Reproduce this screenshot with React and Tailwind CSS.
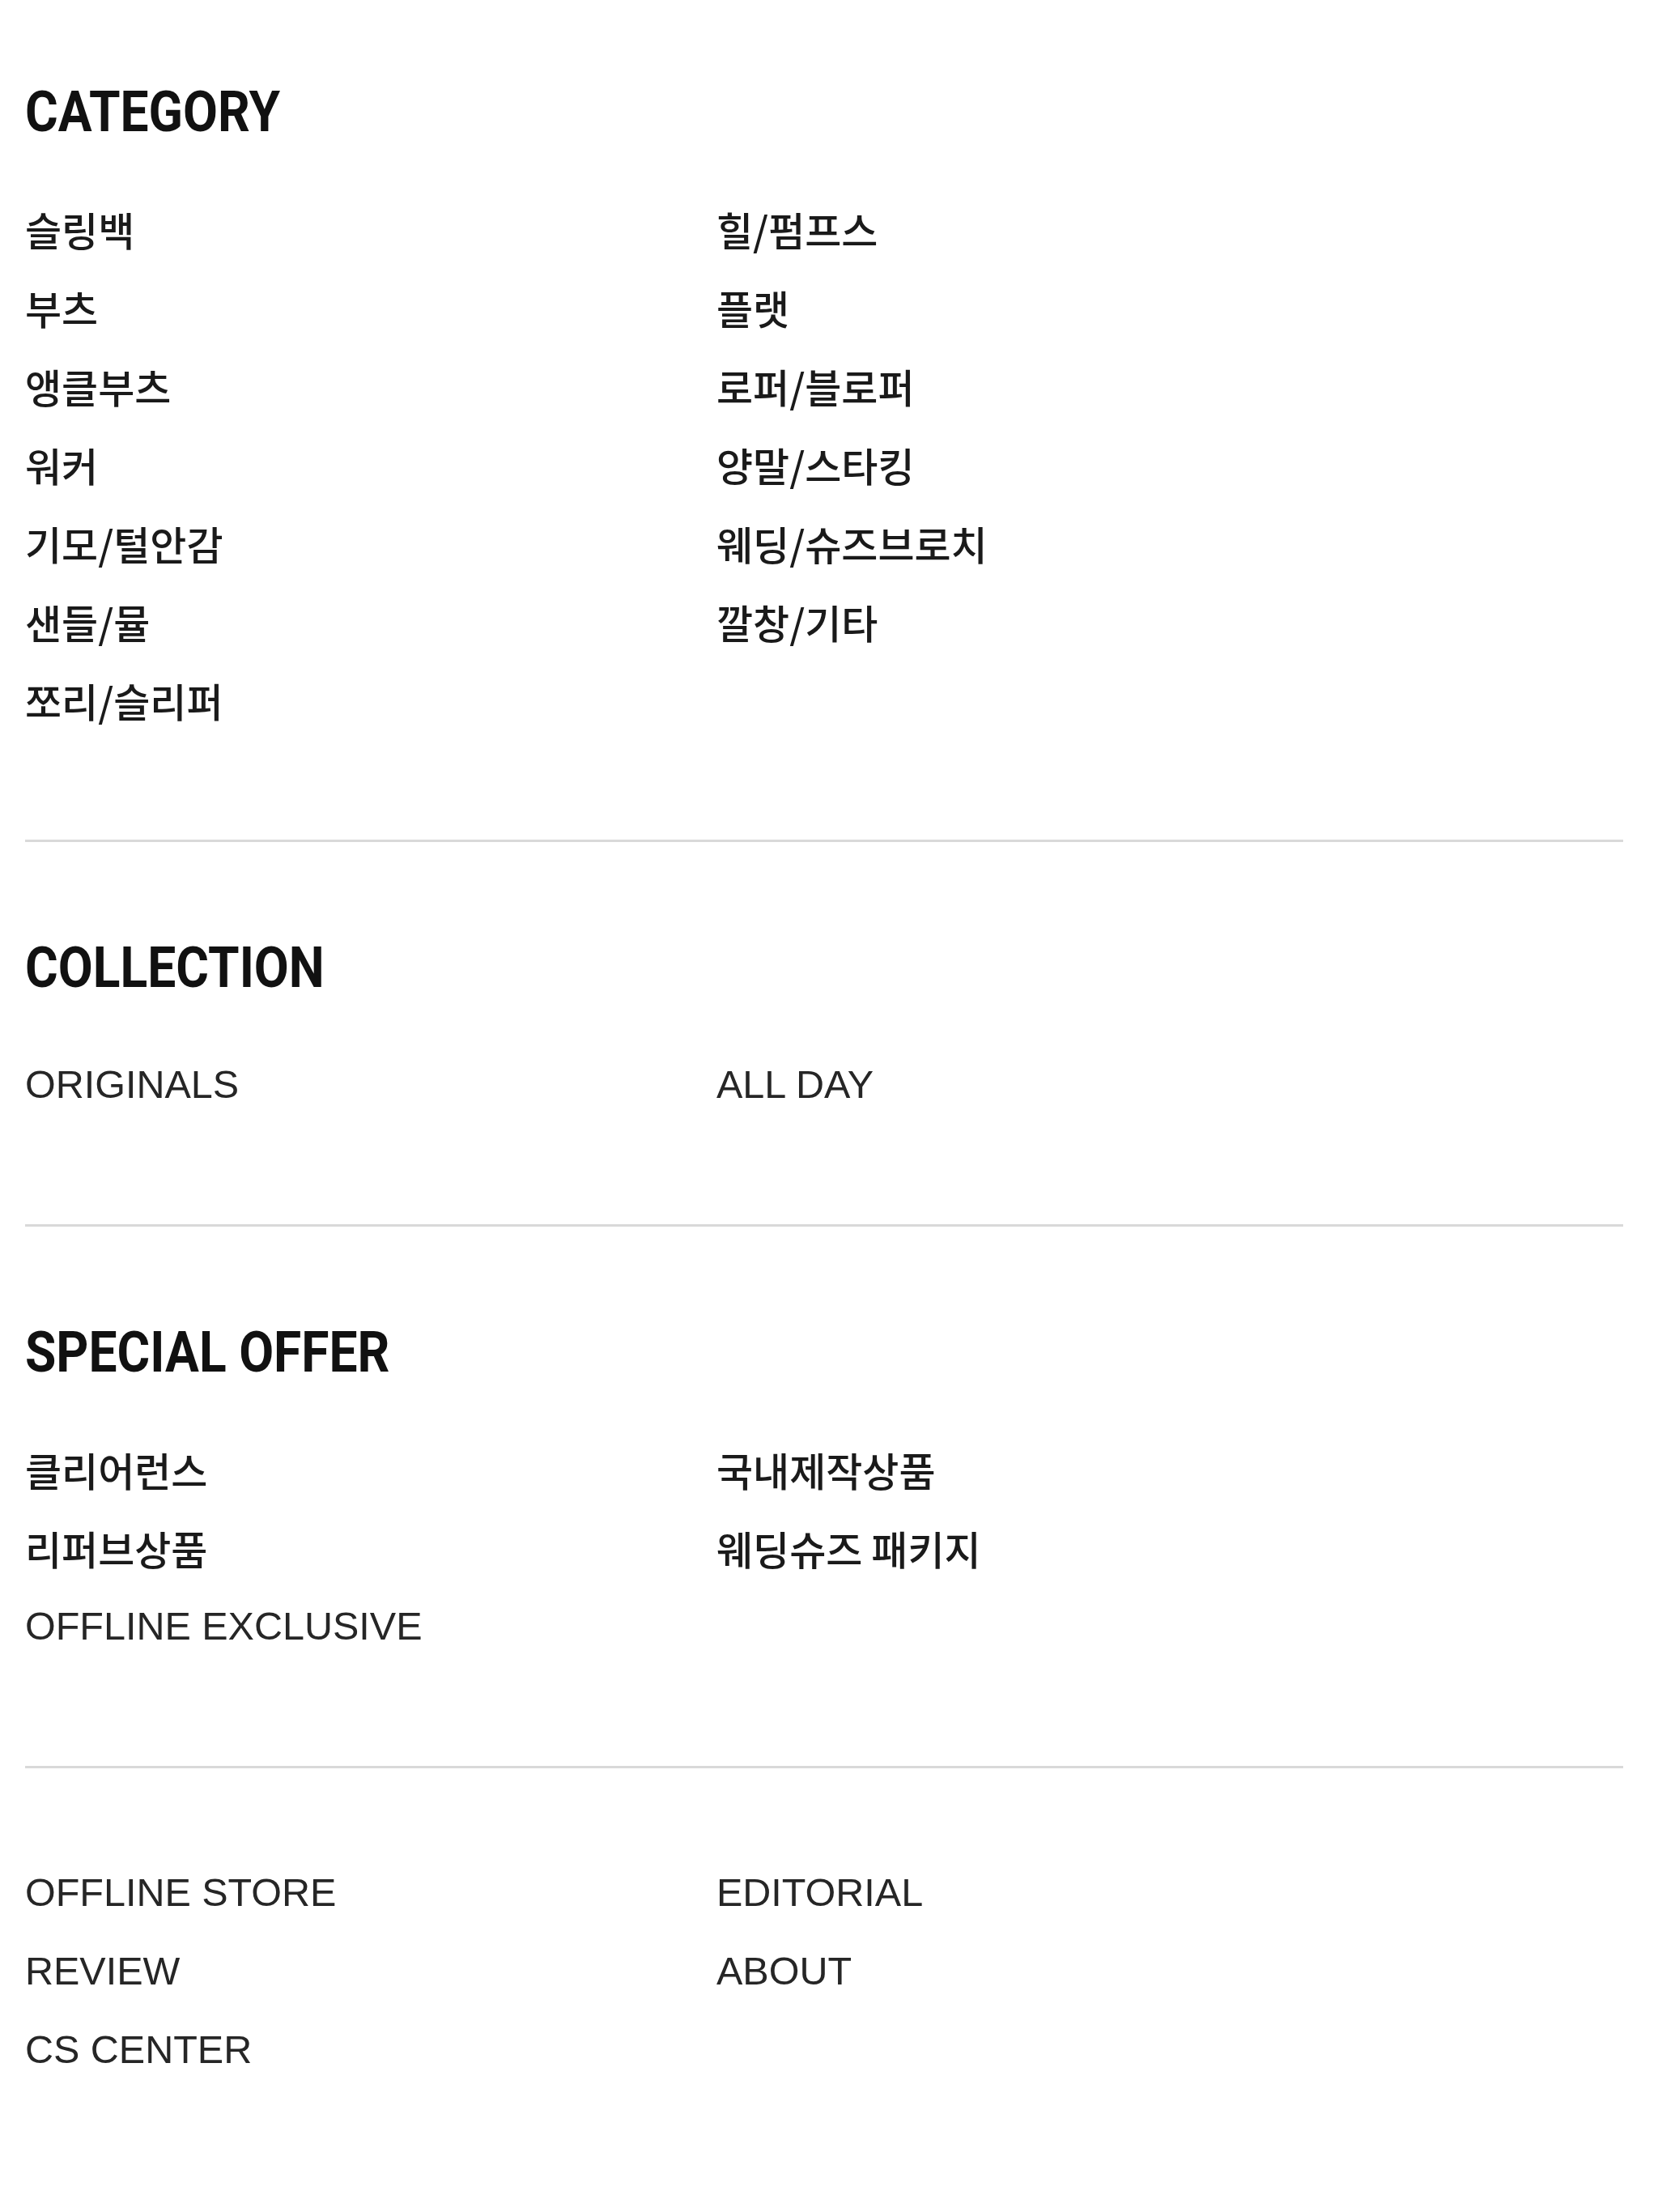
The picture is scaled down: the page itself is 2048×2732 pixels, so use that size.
import React from "react";

const sections = [
  {
    title: "CATEGORY",
    items: [
      "슬링백", "힐/펌프스",
      "부츠", "플랫",
      "앵클부츠", "로퍼/블로퍼",
      "워커", "양말/스타킹",
      "기모/털안감", "웨딩/슈즈브로치",
      "샌들/뮬", "깔창/기타",
      "쪼리/슬리퍼",
    ],
  },
  {
    title: "COLLECTION",
    items: ["ORIGINALS", "ALL DAY"],
  },
  {
    title: "SPECIAL OFFER",
    items: ["클리어런스", "국내제작상품", "리퍼브상품", "웨딩슈즈 패키지", "OFFLINE EXCLUSIVE"],
  },
  {
    title: null,
    items: ["OFFLINE STORE", "EDITORIAL", "REVIEW", "ABOUT", "CS CENTER"],
  },
];

const isKorean = (text) => /[\uac00-\ud7a3]/.test(text);

const MenuItem = ({ label }) => {
  // korean labels use the CJK face, latin ones an Arial-width face
  if (isKorean(label)) {
    return (
      <a
        href="#"
        className="block h-[97px] leading-[97px] text-[49px] font-medium text-[#1a1a1a] font-['Noto_Sans_CJK_KR',sans-serif] whitespace-nowrap"
      >
        {label}
      </a>
    );
  }
  return (
    <a
      href="#"
      className="block h-[97px] leading-[97px] text-[48.5px] text-[#262626] font-['Liberation_Sans',Arial,sans-serif] whitespace-nowrap"
    >
      {label}
    </a>
  );
};

const Section = ({ title, items, last }) => {
  return (
    <section
      className={`${title ? "pt-[120px]" : "pt-[105px]"} ${
        last ? "pb-[150px]" : "pb-[124px] border-b-[3px] border-[#d9d9d9]"
      }`}
    >
      {title && (
        <h2 className="h-[70px] leading-[70px] mb-[61px] text-[70px] font-bold text-[#111111] font-['Roboto',sans-serif] origin-left scale-x-[0.89] whitespace-nowrap">
          {title}
        </h2>
      )}
      <ul className="grid grid-cols-[854px_1fr]">
        {items.map((item) => (
          <li key={item}>
            <MenuItem label={item} />
          </li>
        ))}
      </ul>
    </section>
  );
};

export default function App() {
  return (
    <div className="min-h-screen bg-white">
      <nav className="pl-[31px] pr-[43px] [&>section:first-child]:pt-[103px]">
        {sections.map((s, i) => (
          <Section
            key={s.title ?? "etc"}
            title={s.title}
            items={s.items}
            last={i === sections.length - 1}
          />
        ))}
      </nav>
    </div>
  );
}
